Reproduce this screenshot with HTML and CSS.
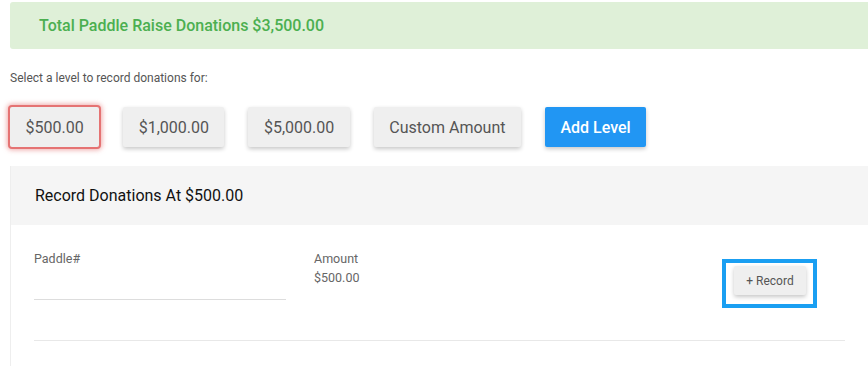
FILE: index.html
```html
<!DOCTYPE html>
<html lang="en">

<head>
    <meta charset="UTF-8">
    <meta name="viewport" content="width=device-width, initial-scale=1.0">
    <title>Paddle Raise</title>
    <link rel="stylesheet" href="styles.css">
</head>

<body>
    <div class="alert-total">Total Paddle Raise Donations $3,500.00</div>

    <p class="hint">Select a level to record donations for:</p>

    <div class="levels">
        <button class="level selected">$500.00</button>
        <button class="level">$1,000.00</button>
        <button class="level">$5,000.00</button>
        <button class="level">Custom Amount</button>
        <button class="level add">Add Level</button>
    </div>

    <section class="panel">
        <div class="panel-head">Record Donations At $500.00</div>
        <div class="panel-body">
            <div class="entry-row">
                <div class="paddle-col">
                    <label for="paddle">Paddle#</label>
                    <input type="text" id="paddle" name="paddle">
                </div>
                <div class="amount-col">
                    <div class="field-label">Amount</div>
                    <div class="amount-value">$500.00</div>
                </div>
                <div class="record-wrap">
                    <button class="record-btn">+ Record</button>
                </div>
            </div>
        </div>
    </section>
</body>

</html>
```

FILE: styles.css
```css
/* page */
body {
    margin: 0;
    padding: 0 0 0 10px;
    font-family: Roboto, "Liberation Sans", Arial, sans-serif;
    color: #555;
    overflow: hidden;
}

.alert-total {
    margin-top: 2px;
    height: 47px;
    line-height: 47px;
    padding-left: 29px;
    background: #dff0d8;
    color: #4caf50;
    font-size: 16px;
    font-weight: 500;
    border-radius: 3px 0 0 3px;
}

.hint {
    margin: 21px 0 0;
    font-size: 12px;
    line-height: 16px;
    color: #555;
}

.levels {
    display: flex;
    gap: 24px;
    margin-top: 21px;
}

.level {
    height: 40px;
    padding: 0 15.5px;
    border: none;
    border-radius: 2px;
    background: #efefef;
    color: #555;
    font-family: inherit;
    font-size: 16px;
    box-shadow: 0 2px 4px rgba(0, 0, 0, 0.22);
}

.level.selected {
    box-shadow: 0 0 0 2px #e57373, 0 0 5px 3px rgba(229, 115, 115, 0.6);
}

.level.add {
    background: #2196f3;
    color: #fff;
    font-weight: 500;
}

.panel {
    margin-top: 19px;
    border-left: 1px solid #eee;
}

.panel-head {
    height: 59px;
    line-height: 59px;
    padding-left: 24px;
    background: #f5f5f5;
    color: #111;
    font-size: 16px;
}

.panel-body {
    padding: 26px 23px 40px 23px;
}

.entry-row {
    display: flex;
    align-items: flex-start;
    padding-bottom: 32px;
    border-bottom: 1px solid #e8e8e8;
}

.paddle-col {
    width: 252px;
    margin-right: 28px;
}

.paddle-col label,
.field-label {
    display: block;
    font-size: 12.5px;
    line-height: 16px;
    color: #666;
}

.paddle-col input {
    display: block;
    width: 100%;
    box-sizing: border-box;
    height: 33px;
    border: none;
    border-bottom: 1px solid #ddd;
    outline: none;
    font-family: inherit;
}

.amount-value {
    margin-top: 3px;
    font-size: 12.5px;
    color: #666;
}

.record-wrap {
    margin: 8px 28px 0 auto;
    padding: 3px 7px 9px 8px;
    border: 4px solid #1a9ff2;
}

.record-btn {
    height: 29px;
    width: 72px;
    border: none;
    border-radius: 2px;
    background: #efefef;
    color: #555;
    font-family: inherit;
    font-size: 12px;
    box-shadow: 0 2px 4px rgba(0, 0, 0, 0.22);
}
```
